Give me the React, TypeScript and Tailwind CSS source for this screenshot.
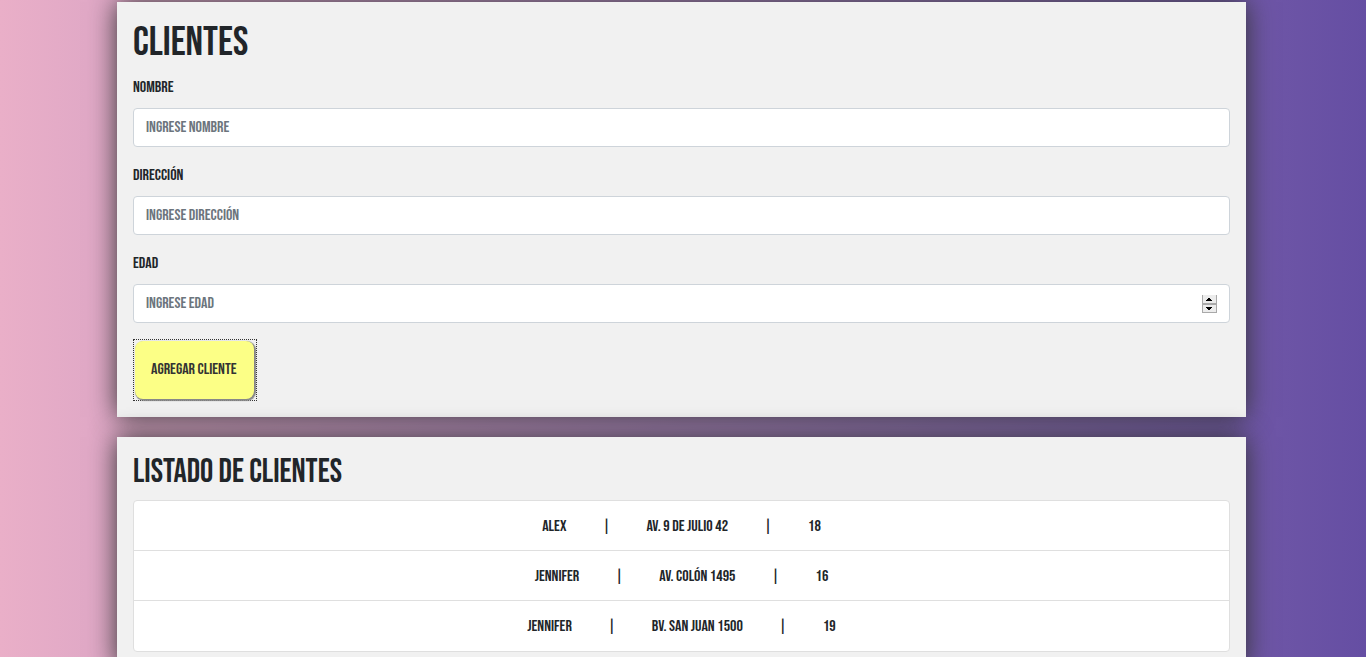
const FIELDS = [
  { id: "nombre", label: "Nombre", placeholder: "Ingrese nombre", type: "text" },
  { id: "direccion", label: "Dirección", placeholder: "Ingrese dirección", type: "text" },
  { id: "edad", label: "Edad", placeholder: "Ingrese edad", type: "number" },
];

const CLIENTS = [
  { name: "Alex", address: "Av. 9 de Julio 42", age: 18 },
  { name: "Jennifer", address: "Av. Colón 1495", age: 16 },
  { name: "Jennifer", address: "Bv. San Juan 1500", age: 19 },
];

function Stepper() {
  return (
    <span aria-hidden="true" className="pointer-events-none absolute inset-y-0 right-3 flex items-center">
      <svg width="16" height="18" viewBox="0 0 16 18">
        <rect x="0" y="0" width="15" height="18" fill="#a9a9a9" />
        <rect x="1" y="0" width="13" height="8" fill="#ececec" />
        <rect x="1" y="10" width="13" height="7" fill="#ececec" />
        <path d="M4 6h6v-1h-1v-1h-1v-1h-2v1h-1v1h-1z" fill="#000" />
        <path d="M4 12h6v1h-1v1h-1v1h-2v-1h-1v-1h-1z" fill="#000" />
      </svg>
    </span>
  );
}

function Field({ id, label, placeholder, type }: (typeof FIELDS)[number]) {
  return (
    <div className="mb-4">
      <label htmlFor={id} className="mb-2 block leading-[25px]">
        {label}
      </label>
      <div className="relative">
        <input
          id={id}
          type={type}
          placeholder={placeholder}
          className="block h-[39px] w-full rounded border border-[#ced4da] bg-white px-3 uppercase outline-none placeholder:text-[#6c757d] [appearance:textfield] [&::-webkit-inner-spin-button]:appearance-none"
        />
        {type === "number" && <Stepper />}
      </div>
    </div>
  );
}

export default function App() {
  return (
    <div className="min-h-screen bg-linear-to-r from-[#eaafc8] to-[#654ea3] pt-[2px] pr-[120px] pb-5 pl-[117px] font-['Bebas_Neue','Roboto_Condensed',sans-serif] text-base text-[#212529] uppercase">
      <section className="mb-5 bg-[#f1f1f1] p-4 shadow-[0_0_25px_0_#333333]">
        <h1 className="mb-2 text-[41px] leading-[49px]">Clientes</h1>
        <form onSubmit={(e) => e.preventDefault()}>
          {FIELDS.map((f) => (
            <Field key={f.id} {...f} />
          ))}
          <div className="flex">
            <div className="border border-dotted border-[#333333] pt-px pr-[2px] pb-px pl-px">
              <button
                type="submit"
                className="block h-[58px] rounded-lg bg-[#fcff86] pr-[17px] pl-4 text-[#333333] uppercase shadow-[1px_1px_1px_1px_#888888] outline-none"
              >
                Agregar cliente
              </button>
            </div>
          </div>
        </form>
      </section>
      <section className="bg-[#f1f1f1] p-4 shadow-[0_0_25px_0_#333333]">
        <h2 className="mb-2 text-[33px] leading-[39px]">Listado de clientes</h2>
        <ul className="divide-y divide-[#dfdfdf] rounded border border-[#dfdfdf] bg-white">
          {CLIENTS.map((c) => (
            <li key={c.address} className="flex h-[50px] items-center justify-center gap-9 pt-[2px]">
              <span>{c.name}</span>
              <span>|</span>
              <span>{c.address}</span>
              <span>|</span>
              <span>{c.age}</span>
            </li>
          ))}
        </ul>
      </section>
    </div>
  );
}
